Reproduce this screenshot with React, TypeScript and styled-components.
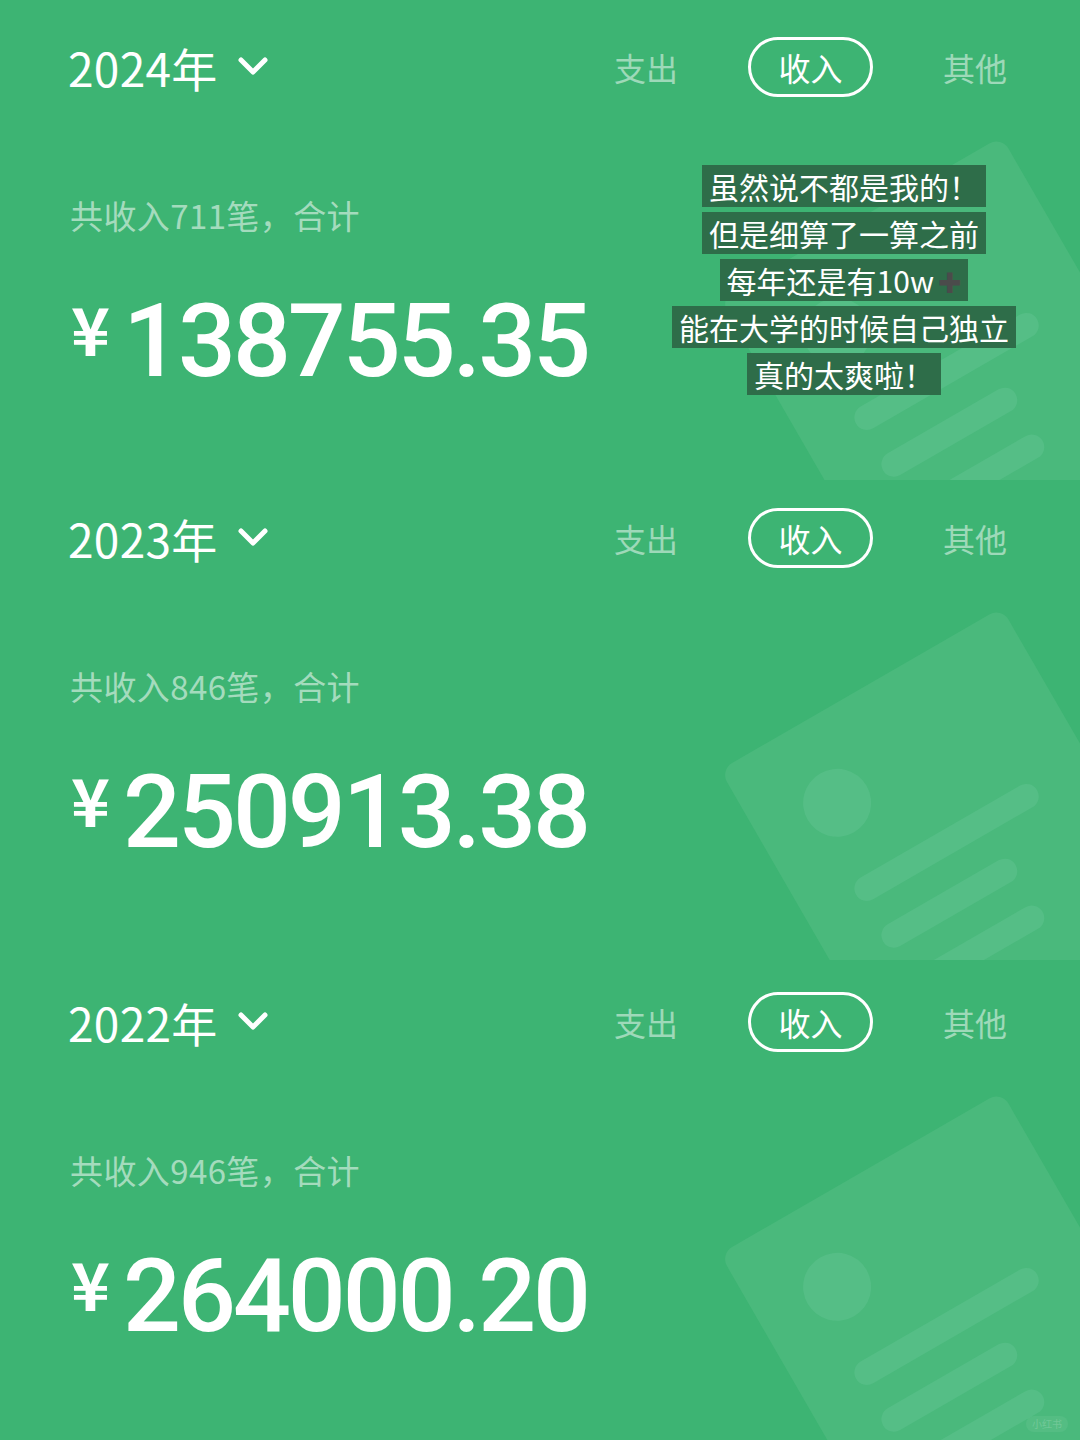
import React from "react";
import styled, { createGlobalStyle } from "styled-components";

const GREEN = "#3db473";

const Global = createGlobalStyle`
  html, body { margin: 0; padding: 0; background: ${GREEN}; }
  body { font-family: "Noto Sans CJK SC", "Noto Sans", sans-serif; }
  * { box-sizing: border-box; }
`;

const Page = styled.div`
  width: 1080px;
  height: 1440px;
  display: flex;
  flex-direction: column;
  background: ${GREEN};
  overflow: hidden;
`;

const Panel = styled.section<{ $top: number }>`
  position: relative;
  height: 480px;
  flex: 0 0 480px;
  overflow: hidden;
  padding: ${(p) => p.$top}px 73px 0 68px;
  display: flex;
  flex-direction: column;
`;

const Deco = styled.svg`
  position: absolute;
  left: 0;
  top: 0;
  width: 1080px;
  height: 480px;
  pointer-events: none;
`;

const Content = styled.div`
  position: relative;
  display: flex;
  flex-direction: column;
`;

const HeaderRow = styled.div`
  height: 60px;
  display: flex;
  align-items: center;
  justify-content: space-between;
`;

const YearPicker = styled.div`
  display: flex;
  align-items: center;
  gap: 20px;
  color: #fff;
  font-size: 46px;
  line-height: 60px;
  letter-spacing: 0.3px;
`;

const Tabs = styled.div`
  display: flex;
  align-items: center;
  gap: 70px;
`;

const Tab = styled.div<{ $active?: boolean }>`
  font-size: 32px;
  line-height: 1;
  color: ${(p) => (p.$active ? "#ffffff" : "rgba(255,255,255,0.5)")};
  ${(p) =>
    p.$active
      ? `
    height: 60px;
    width: 125px;
    border: 3px solid #fff;
    border-radius: 30px;
    display: flex;
    align-items: center;
    justify-content: center;
  `
      : ""}
`;

const Subtitle = styled.div`
  margin-top: 98px;
  margin-left: 2px;
  font-size: 33px;
  line-height: 40px;
  letter-spacing: 0.4px;
  color: rgba(255, 255, 255, 0.55);
`;

const AmountRow = styled.div`
  margin-top: 50px;
  display: flex;
  align-items: flex-start;
  color: #fff;
  height: 110px;
`;

const Currency = styled.span`
  font-family: "Noto Sans CJK SC", sans-serif;
  font-weight: 700;
  font-size: 66px;
  line-height: 1;
  margin: 9px 13px 0 3px;
`;

const Digits = styled.span`
  font-family: Roboto, "Liberation Sans", sans-serif;
  font-weight: 500;
  font-size: 102px;
  line-height: 112px;
  letter-spacing: -3px;
`;

const Notes = styled.div`
  position: absolute;
  top: 165px;
  left: 844px;
  transform: translateX(-50%);
  display: flex;
  flex-direction: column;
  align-items: center;
  gap: 5px;
`;

const Note = styled.div`
  background: #2e6d49;
  color: #fff;
  font-size: 30px;
  line-height: 42px;
  height: 42px;
  padding: 0 7px;
  white-space: nowrap;
`;

const Plus = styled.span`
  font-family: "DejaVu Sans", sans-serif;
  color: #4b4b4b;
  font-size: 28px;
  margin-left: 4px;
  font-weight: 700;
`;

const Watermark = styled.div`
  position: absolute;
  right: 12px;
  bottom: 8px;
  padding: 1px 6px;
  border-radius: 8px;
  background: rgba(255, 255, 255, 0.06);
  color: rgba(255, 255, 255, 0.18);
  font-size: 10px;
  line-height: 14px;
`;

const Chevron = () => (
  <svg width="30" height="22" viewBox="0 0 30 22">
    <polyline
      points="3,4 15,16 27,4"
      fill="none"
      stroke="#fff"
      strokeWidth="5"
      strokeLinecap="round"
      strokeLinejoin="round"
    />
  </svg>
);

const CardDeco = ({ shift }: { shift: number }) => (
  <Deco viewBox="0 0 1080 480">
    <g transform={`translate(720 ${299 - shift}) rotate(-30)`}>
      <rect x="0" y="0" width="325" height="420" rx="14" fill="#4ab97c" />
      <circle cx="85" cy="87" r="34" fill="#55be86" />
      <line x1="68" y1="176" x2="252" y2="176" stroke="#55be86" strokeWidth="25" strokeLinecap="round" />
      <line x1="68" y1="230" x2="196" y2="230" stroke="#55be86" strokeWidth="25" strokeLinecap="round" />
      <line x1="68" y1="284" x2="196" y2="284" stroke="#55be86" strokeWidth="25" strokeLinecap="round" />
    </g>
  </Deco>
);

type YearData = {
  year: string;
  count: string;
  amount: string;
  top: number;
  shift: number;
};

const data: YearData[] = [
  { year: "2024", count: "711", amount: "138755.35", top: 37, shift: 0 },
  { year: "2023", count: "846", amount: "250913.38", top: 28, shift: 9 },
  { year: "2022", count: "946", amount: "264000.20", top: 32, shift: 5 },
];

export default function App() {
  return (
    <>
      <Global />
      <Page>
        {data.map((d, i) => (
          <Panel key={d.year} $top={d.top}>
            <CardDeco shift={d.shift} />
            <Content>
              <HeaderRow>
                <YearPicker>
                  <span>{d.year}年</span>
                  <Chevron />
                </YearPicker>
                <Tabs>
                  <Tab>支出</Tab>
                  <Tab $active>收入</Tab>
                  <Tab>其他</Tab>
                </Tabs>
              </HeaderRow>
              <Subtitle>共收入{d.count}笔，合计</Subtitle>
              <AmountRow>
                <Currency>¥</Currency>
                <Digits>{d.amount}</Digits>
              </AmountRow>
            </Content>
            {i === 0 && (
              <Notes>
                <Note>虽然说不都是我的！</Note>
                <Note>但是细算了一算之前</Note>
                <Note>
                  每年还是有10w<Plus>✚</Plus>
                </Note>
                <Note>能在大学的时候自己独立</Note>
                <Note>真的太爽啦！</Note>
              </Notes>
            )}
            {i === 2 && <Watermark>小红书</Watermark>}
          </Panel>
        ))}
      </Page>
    </>
  );
}
